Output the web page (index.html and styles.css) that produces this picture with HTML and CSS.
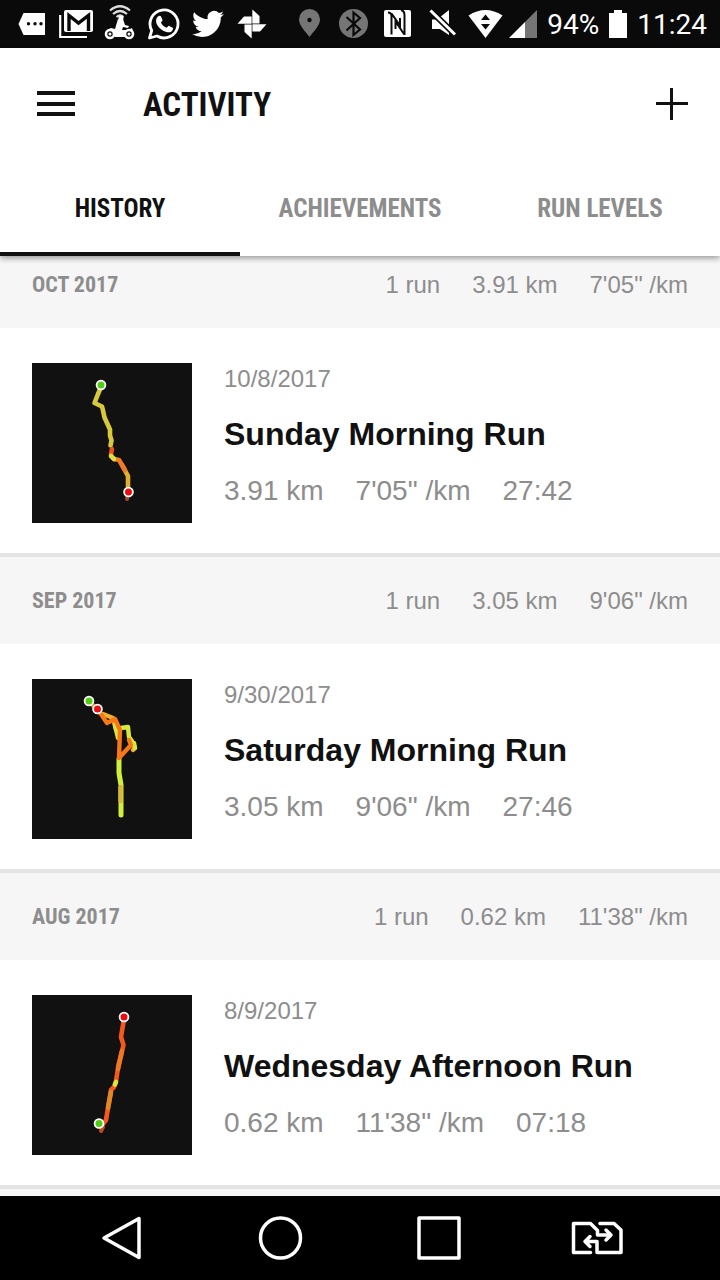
FILE: index.html
```
<!DOCTYPE html>
<html lang="en">
<head>
  <meta charset="utf-8">
  <meta name="viewport" content="width=device-width, initial-scale=1">
  <title>Activity</title>
  <link rel="stylesheet" href="styles.css">
</head>
<body>
<div class="app">

  <!-- status bar -->
  <div class="status">
    <div class="status-icons">
      <svg class="sicon" viewBox="0 0 34 34"><path fill="#fff" d="M3.500 17L8.500 6H30v22H8.500z"/><g fill="#0a0a0a"><circle cx="13.500" cy="16.700" r="1.700"/><circle cx="20" cy="16.700" r="1.700"/><circle cx="26" cy="16.700" r="1.700"/></g></svg>
      <svg class="sicon" viewBox="0 0 34 34"><path fill="none" stroke="#fff" stroke-width="2.200" d="M1.200 8v22H28"/><rect x="5" y="3" width="29" height="22" rx="2" fill="#fff"/><path fill="none" stroke="#0a0a0a" stroke-width="3.400" d="M10 24V8.500L19.500 16 29.500 8.500V24"/></svg>
      <svg class="sicon" viewBox="0 0 34 34"><g fill="none" stroke="#ddd" stroke-width="2.200"><path d="M7 3.500q10-8.500 20 0M10 7q7-6 14 0M13.500 10q3.500-3 7 0"/></g><circle cx="18" cy="11" r="2.500" fill="#fff"/><path fill="#fff" d="M15 12h5l2 6 4 1-1 2-5-1-1 3h6l4-2 1 3-8 6H12l-8-7 4-2 4 1z"/><g fill="#0a0a0a" stroke="#fff" stroke-width="2.600"><circle cx="7" cy="27" r="4"/><circle cx="26" cy="27" r="4"/></g><circle cx="7" cy="27" r="1.500" fill="#fff"/><circle cx="26" cy="27" r="1.500" fill="#fff"/></svg>
      <svg class="sicon" viewBox="0 0 34 34"><path fill="none" stroke="#fff" stroke-width="2.800" stroke-linejoin="round" d="M2.500 31l2.200-7.500A14 14 0 1 1 10 29z"/><path fill="#fff" d="M11 9.500c1-1 2.500-1 3 0l1.500 3.500c.2.700-1.500 2.200-1.500 2.800 1 2.300 3 4 5.500 5 .8 0 1.800-2.200 2.700-1.900l3.500 1.800c.8.500 0 3-1.500 4-2 1.100-4.500.6-7.500-.8-3.500-1.800-5.800-4.400-7.200-7.500-.9-2.700-.4-5.300 1.500-6.900z"/></svg>
      <svg class="sicon" viewBox="0 0 34 34"><path fill="#fff" transform="translate(1 1) scale(1.333)" d="M23.953 4.570a10 10 0 01-2.825.775 4.958 4.958 0 002.163-2.723c-.951.555-2.005.959-3.127 1.184a4.920 4.920 0 00-8.384 4.482C7.690 8.095 4.067 6.130 1.640 3.162a4.822 4.822 0 00-.666 2.475c0 1.710.870 3.213 2.188 4.096a4.904 4.904 0 01-2.228-.616v.060a4.923 4.923 0 003.946 4.827 4.996 4.996 0 01-2.212.085 4.936 4.936 0 004.604 3.417 9.867 9.867 0 01-6.102 2.105c-.390 0-.779-.023-1.170-.067a13.995 13.995 0 007.557 2.209c9.053 0 13.998-7.496 13.998-13.985 0-.210 0-.420-.015-.630A9.935 9.935 0 0024 4.590z"/></svg>
      <svg class="sicon" viewBox="0 0 34 34"><g fill="#fff"><path id="blade" d="M17.300 2.500l7.200 6.500v7.600h-7.200z"/><use href="#blade" transform="rotate(90 17 17)"/><use href="#blade" transform="rotate(180 17 17)"/><use href="#blade" transform="rotate(270 17 17)"/></g></svg>
    </div>
    <div class="status-icons">
      <svg class="sicon" viewBox="0 0 34 34"><path fill="#757575" d="M17.500 30C13 24 7 18.500 7 12.500a10.500 10.500 0 0 1 21 0c0 6-6 11.500-10.500 17.500z"/><circle cx="17.500" cy="13" r="2.200" fill="#0a0a0a"/></svg>
      <svg class="sicon" viewBox="0 0 34 34"><circle cx="17.500" cy="16.500" r="14.500" fill="#757575"/><path fill="none" stroke="#0a0a0a" stroke-width="2.200" d="M10.500 10L24 22.500 17.500 28V5.500L24 11 10.500 23.500"/></svg>
      <svg class="sicon" viewBox="0 0 34 34"><rect x="4" y="3" width="27" height="27" rx="2" fill="#fff"/><path fill="none" stroke="#0a0a0a" stroke-width="2" d="M8 5.500q3.500 0 3.500 3.500v18.500M11.500 6.500l8.500 12V11M15.500 22v-7.500l8.500 12.500M24.500 28V8q0-4-3.500-5"/></svg>
      <svg class="sicon" viewBox="0 0 34 34"><path fill="#fff" d="M8 12.500h5L25 3v25l-9-6H8z"/><path stroke="#0a0a0a" stroke-width="6" d="M6.500 3.500L31 27.500"/><path stroke="#fff" stroke-width="3" d="M6.500 3.500L31 27.500"/></svg>
      <svg class="sicon" viewBox="0 0 34 34"><path fill="#fff" d="M.5 8.500Q17.500-2.500 34.500 8.500L17.500 31z"/><path fill="#0a0a0a" d="M17.500 7.500l4.500 5.500h-9zM17.500 22.500L13 17h9z"/></svg>
    </div>
    <div class="status-info">
      <svg class="signal" viewBox="0 0 28 28"><path fill="#fff" d="M0 28h16V12z"/><path fill="#757575" d="M16 12v16h12V0z"/></svg>
      <span>94%</span>
      <svg class="battery" viewBox="0 0 18 28"><path fill="#fff" d="M0 3h5V0h8v3h5v25H0z"/></svg>
      <span>11:24</span>
    </div>
  </div>

  <header class="header">
    <div class="toolbar">
      <button class="icon-btn" aria-label="Menu">
        <svg class="menu" viewBox="0 0 38 26"><path fill="#111" d="M0 0h38v4H0zM0 11h38v4H0zM0 21h38v4H0z"/></svg>
      </button>
      <h1 class="title">ACTIVITY</h1>
      <button class="icon-btn" aria-label="Add run">
        <svg class="plus" viewBox="0 0 32 32"><path fill="#111" d="M14 0h3v14h15v3H17v15h-3V17H0v-3h14z"/></svg>
      </button>
    </div>
    <nav class="tabs">
      <button class="tab active">HISTORY</button>
      <button class="tab">ACHIEVEMENTS</button>
      <button class="tab">RUN LEVELS</button>
    </nav>
  </header>

  <main class="list">
    <section class="month scrolled">
      <div class="month-head">
        <h2>OCT 2017</h2>
        <span>1 run</span><span>3.91 km</span><span>7'05" /km</span>
      </div>
      <article class="run">
        <svg class="map" viewBox="0 0 160 160">
          <g fill="none" stroke-width="4.600" stroke-linejoin="round" stroke-linecap="round">
            <path stroke="#a8452a" stroke-width="4" d="M96 131l-1 5"/>
            <path stroke="#d8c83c" d="M69 24l-3 7-3.500 9 7.500 3.500 1 4 1.500 7 5.500 12v6l1.500 5-1 5"/>
            <path stroke="#e0b030" d="M90 102l6 11v16"/>
            <path stroke="#f07a28" d="M82 96l5 1 6 10"/>
            <path stroke="#f0501c" d="M80 86l-1 5"/>
            <path stroke="#dce040" d="M79 93l3 3"/>
          </g>
          <g stroke="#fff" stroke-width="1.800"><circle cx="69" cy="22" r="4.400" fill="#50cc14"/><circle cx="96.500" cy="129" r="4.400" fill="#ec0c10"/></g>
        </svg>
        <div class="info">
          <div class="date">10/8/2017</div>
          <h3>Sunday Morning Run</h3>
          <div class="stats"><span>3.91 km</span><span>7'05" /km</span><span>27:42</span></div>
        </div>
      </article>
    </section>

    <section class="month">
      <div class="month-head">
        <h2>SEP 2017</h2>
        <span>1 run</span><span>3.05 km</span><span>9'06" /km</span>
      </div>
      <article class="run">
        <svg class="map" viewBox="0 0 160 160">
          <g fill="none" stroke-width="4.400" stroke-linejoin="round" stroke-linecap="round">
            <path stroke="#f0b030" d="M71 35l10 4 3 12M98 61l5 8-2 2"/>
            <path stroke="#d8e83c" d="M83 46l3 13M89 49l7-1 1 10 3 4M102 64l1 5"/>
            <path stroke="#d0f03c" stroke-width="5" d="M87 80v14l2 12v30"/>
            <path stroke="#d8b83c" d="M88.500 108v14"/>
            <path stroke="#f87818" d="M57 22l12 13 6 9 8-4 5 11-1 28 12-13-2-5"/>
          </g>
          <g stroke="#fff" stroke-width="1.800"><circle cx="57" cy="22" r="4.400" fill="#50cc14"/><circle cx="65.500" cy="30" r="4.400" fill="#ec0c10"/></g>
        </svg>
        <div class="info">
          <div class="date">9/30/2017</div>
          <h3>Saturday Morning Run</h3>
          <div class="stats"><span>3.05 km</span><span>9'06" /km</span><span>27:46</span></div>
        </div>
      </article>
    </section>

    <section class="month">
      <div class="month-head">
        <h2>AUG 2017</h2>
        <span>1 run</span><span>0.62 km</span><span>11'38" /km</span>
      </div>
      <article class="run">
        <svg class="map" viewBox="0 0 160 160">
          <g fill="none" stroke-width="4.600" stroke-linejoin="round" stroke-linecap="round">
            <path stroke="#f4581c" d="M92 24l-3 18 2.500 8-5 20-2.500 16-2 6-3 3-2 12-3 18-5 7"/>
            <path stroke="#c04a20" stroke-width="4" d="M71 132l-2 4"/>
            <path stroke="#f07820" d="M90 56l-4 18"/>
            <path stroke="#e08828" d="M79 97l-3 16"/>
            <path stroke="#d8e83c" d="M84 87l-1 2.500"/>
          </g>
          <g stroke="#fff" stroke-width="1.800"><circle cx="92" cy="22" r="4.400" fill="#ec0c10"/><circle cx="67" cy="128.500" r="4.400" fill="#50cc14"/></g>
        </svg>
        <div class="info">
          <div class="date">8/9/2017</div>
          <h3>Wednesday Afternoon Run</h3>
          <div class="stats"><span>0.62 km</span><span>11'38" /km</span><span>07:18</span></div>
        </div>
      </article>
    </section>

    <section class="month">
      <div class="month-head"></div>
    </section>
  </main>

  <!-- android navigation -->
  <nav class="navbar">
    <button aria-label="Back"><svg class="nicon" viewBox="0 0 52 44"><path d="M43 2.500v39L8 22z"/></svg></button>
    <button aria-label="Home"><svg class="nicon" viewBox="0 0 52 44"><circle cx="25.500" cy="22" r="20"/></svg></button>
    <button aria-label="Recent apps"><svg class="nicon" viewBox="0 0 52 44"><path d="M6 2h40v40H6z"/></svg></button>
    <button aria-label="Switch"><svg class="nicon" stroke-linecap="round" viewBox="0 0 52 44"><path d="M18.500 36.500H1.500V7.500h17l7 7v4.500h13M34 14l5 5-5 5M28 7.500h14l7 6.500v22.500H25V25.500H13M18 20.500l-5 5 5 5"/></svg></button>
  </nav>

</div>
</body>
</html>
```
FILE: styles.css
```
* {
  box-sizing: border-box;
}
body {
  margin: 0;
  color: #111;
  background-color: #fff;
  font-family: "Liberation Sans", Arial, sans-serif;
}
h1, h2, h3 {
  margin: 0;
}
button {
  border: 0;
  padding: 0;
  background: none;
  color: inherit;
}
svg {
  display: block;
  flex: none;
}
.app {
  display: flex;
  flex-direction: column;
  height: 100vh;
}

/* status bar */
.status {
  display: flex;
  align-items: center;
  flex: none;
  height: 48px;
  padding: 0 13px 0 15px;
  background-color: #0a0a0a;
  color: #fff;
  font: 28px Roboto, sans-serif;
}
.status-icons {
  display: flex;
  gap: 10px;
  margin-right: 23px;
}
.sicon {
  width: 34px;
  height: 34px;
  overflow: visible;
}
.status-info {
  display: flex;
  align-items: center;
  gap: 10px;
  margin-left: auto;
}
.status-icons + .status-icons {
  margin-right: 0;
}
.signal {
  width: 28px;
  height: 28px;
}
.battery {
  width: 18px;
  height: 28px;
}

/* header */
.header {
  position: relative;
  flex: none;
  background-color: #fff;
  box-shadow: 0 2px 6px rgba(0, 0, 0, 0.4);
  z-index: 1;
}
.toolbar {
  display: flex;
  align-items: center;
  height: 112px;
  padding: 0 32px 0 37px;
}
.menu {
  width: 38px;
  height: 26px;
}
.plus {
  width: 32px;
  height: 32px;
}
.title {
  flex: 1;
  padding-left: 68px;
  font: bold 33px "Liberation Sans Narrow", "Roboto Condensed", "Arial Narrow", sans-serif;
}
.tabs {
  display: flex;
  height: 96px;
}
.tab {
  flex: 1 1 0;
  border-top: 4px solid transparent;
  border-bottom: 4px solid transparent;
  color: #8d8d8d;
  font: bold 25px "Liberation Sans Narrow", "Roboto Condensed", "Arial Narrow", sans-serif;
}
.tab.active {
  border-bottom-color: #111;
  color: #111;
}

/* run list */
.list {
  flex: 1;
  min-height: 0;
  overflow: hidden;
}
.month.scrolled {
  margin-top: -19px;
}
.month-head {
  display: flex;
  align-items: center;
  gap: 32px;
  height: 91px;
  padding: 0 32px;
  border-top: 4px solid #e4e4e4;
  background-color: #f6f6f6;
  color: #8d8d8d;
  font-size: 24px;
}
.month-head h2 {
  margin-right: auto;
  font: bold 22px "Liberation Sans Narrow", "Roboto Condensed", "Arial Narrow", sans-serif;
}
.run {
  display: flex;
  gap: 32px;
  padding: 35px 32px 30px;
}
.map {
  width: 160px;
  height: 160px;
  background-color: #111;
}
.info {
  color: #8d8d8d;
}
.date {
  font-size: 24px;
  line-height: 32px;
}
.info h3 {
  margin: 19px 0 21px;
  color: #111;
  font-size: 32px;
  line-height: 40px;
}
.stats {
  display: flex;
  gap: 32px;
  font-size: 28px;
  line-height: 32px;
}

/* bottom navigation */
.navbar {
  display: flex;
  align-items: center;
  flex: none;
  height: 84px;
  padding: 0 43px;
  background-color: #000;
}
.navbar button {
  flex: 1;
  display: flex;
  justify-content: center;
}
.nicon {
  width: 52px;
  height: 44px;
  overflow: visible;
  fill: none;
  stroke: #fff;
  stroke-width: 3.5;
  stroke-linejoin: round;
}
```
